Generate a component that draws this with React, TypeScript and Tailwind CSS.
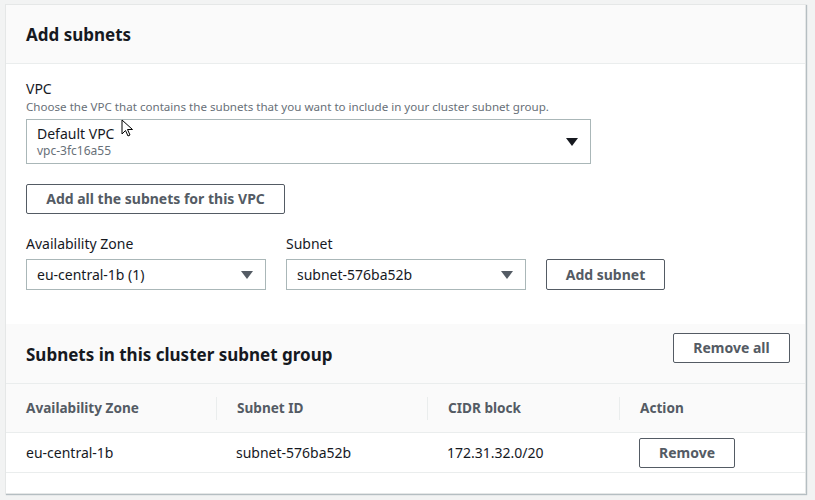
import React from "react";

const Caret = ({ className }: { className: string }) => (
  <svg width="12" height="8" viewBox="0 0 12 8" className={className}>
    <path d="M0 0 H12 L6 8 Z" fill="currentColor" />
  </svg>
);

const Btn = ({ children, className }: { children: React.ReactNode; className: string }) => (
  <button
    className={`border border-[#545b64] rounded-[2px] bg-white text-[#545b64] font-bold text-[14px] leading-none flex items-center justify-center ${className}`}
  >
    {children}
  </button>
);

export default function App() {
  return (
    <div
      className="w-[815px] h-[500px] bg-[#f2f3f3] pt-[4px] pl-[5px] text-[#16191f]"
      style={{ fontFamily: '"Noto Sans", "Open Sans", Arial, sans-serif' }}
    >
      <div className="relative w-[801px] h-[490px] bg-white border border-[#e5e7e7] shadow-[1px_1px_1px_0_rgba(0,31,49,0.25)] overflow-hidden">
        {/* header */}
        <div className="h-[59px] bg-[#fafafa] border-b border-[#eaeded] flex items-center px-[20px]">
          <h2 className="text-[17px] font-bold leading-none mt-[1px]">Add subnets</h2>
        </div>

        <div className="px-[20px] pt-[16px]">
          <div className="text-[14px] leading-[18px]">VPC</div>
          <div className="text-[11.6px] leading-[16px] text-[#687078] mt-[1px]">
            Choose the VPC that contains the subnets that you want to include in your cluster subnet group.
          </div>
          <div className="mt-[4px] w-[565px] h-[45px] border border-[#aab7b8] flex items-center justify-between pl-[10px] pr-[12px]">
            <div className="flex flex-col">
              <span className="text-[14px] leading-[18px]">Default VPC</span>
              <span className="text-[12px] leading-[16px] text-[#687078]">vpc-3fc16a55</span>
            </div>
            <Caret className="text-[#16191f]" />
          </div>

          <Btn className="mt-[20px] w-[259px] h-[30px]">Add all the subnets for this VPC</Btn>

          <div className="mt-[21px] flex items-end gap-[20px]">
            <div>
              <div className="text-[14px] leading-[18px] mb-[6px]">Availability Zone</div>
              <div className="w-[240px] h-[31px] border border-[#aab7b8] flex items-center justify-between pl-[10px] pr-[12px]">
                <span className="text-[14px]">eu-central-1b (1)</span>
                <Caret className="text-[#545b64]" />
              </div>
            </div>
            <div>
              <div className="text-[14px] leading-[18px] mb-[6px]">Subnet</div>
              <div className="w-[240px] h-[31px] border border-[#aab7b8] flex items-center justify-between pl-[10px] pr-[12px]">
                <span className="text-[14px]">subnet-576ba52b</span>
                <Caret className="text-[#545b64]" />
              </div>
            </div>
            <Btn className="w-[119px] h-[31px]">Add subnet</Btn>
          </div>
        </div>

        {/* second section */}
        <div className="mt-[34px] h-[60px] bg-[#fafafa] border-b border-[#eaeded] flex justify-between pl-[20px] pr-[15px]">
          <h2 className="text-[17px] font-bold leading-none self-center mt-[1px]">Subnets in this cluster subnet group</h2>
          <Btn className="w-[117px] h-[30px] mt-[9px]">Remove all</Btn>
        </div>

        <div className="h-[49px] bg-[#fafafa] border-b border-[#eaeded] flex items-center text-[13.6px] font-bold text-[#545b64]">
          <div className="w-[210px] pl-[20px]">Availability Zone</div>
          <div className="w-[211px] pl-[20px] border-l border-[#eaeded] h-[23px] flex items-center">Subnet ID</div>
          <div className="w-[192px] pl-[20px] border-l border-[#eaeded] h-[23px] flex items-center">CIDR block</div>
          <div className="pl-[20px] border-l border-[#eaeded] h-[23px] flex items-center">Action</div>
        </div>
        <div className="h-[40px] border-b border-[#eaeded] flex items-center text-[14px]">
          <div className="w-[210px] pl-[20px]">eu-central-1b</div>
          <div className="w-[211px] pl-[20px]">subnet-576ba52b</div>
          <div className="w-[192px] pl-[20px]">172.31.32.0/20</div>
          <div className="pl-[20px]">
            <Btn className="w-[96px] h-[30px]">Remove</Btn>
          </div>
        </div>

        {/* mouse cursor */}
        <svg
          className="absolute left-[115px] top-[114px]"
          width="14"
          height="20"
          viewBox="0 0 14 20"
        >
          <path d="M1 1 L1 15 L4.5 11.5 L7 17 L9 16 L6.5 10.5 L11.5 10.5 Z" fill="white" stroke="black" strokeWidth="1" strokeLinejoin="round" />
        </svg>
      </div>
    </div>
  );
}
